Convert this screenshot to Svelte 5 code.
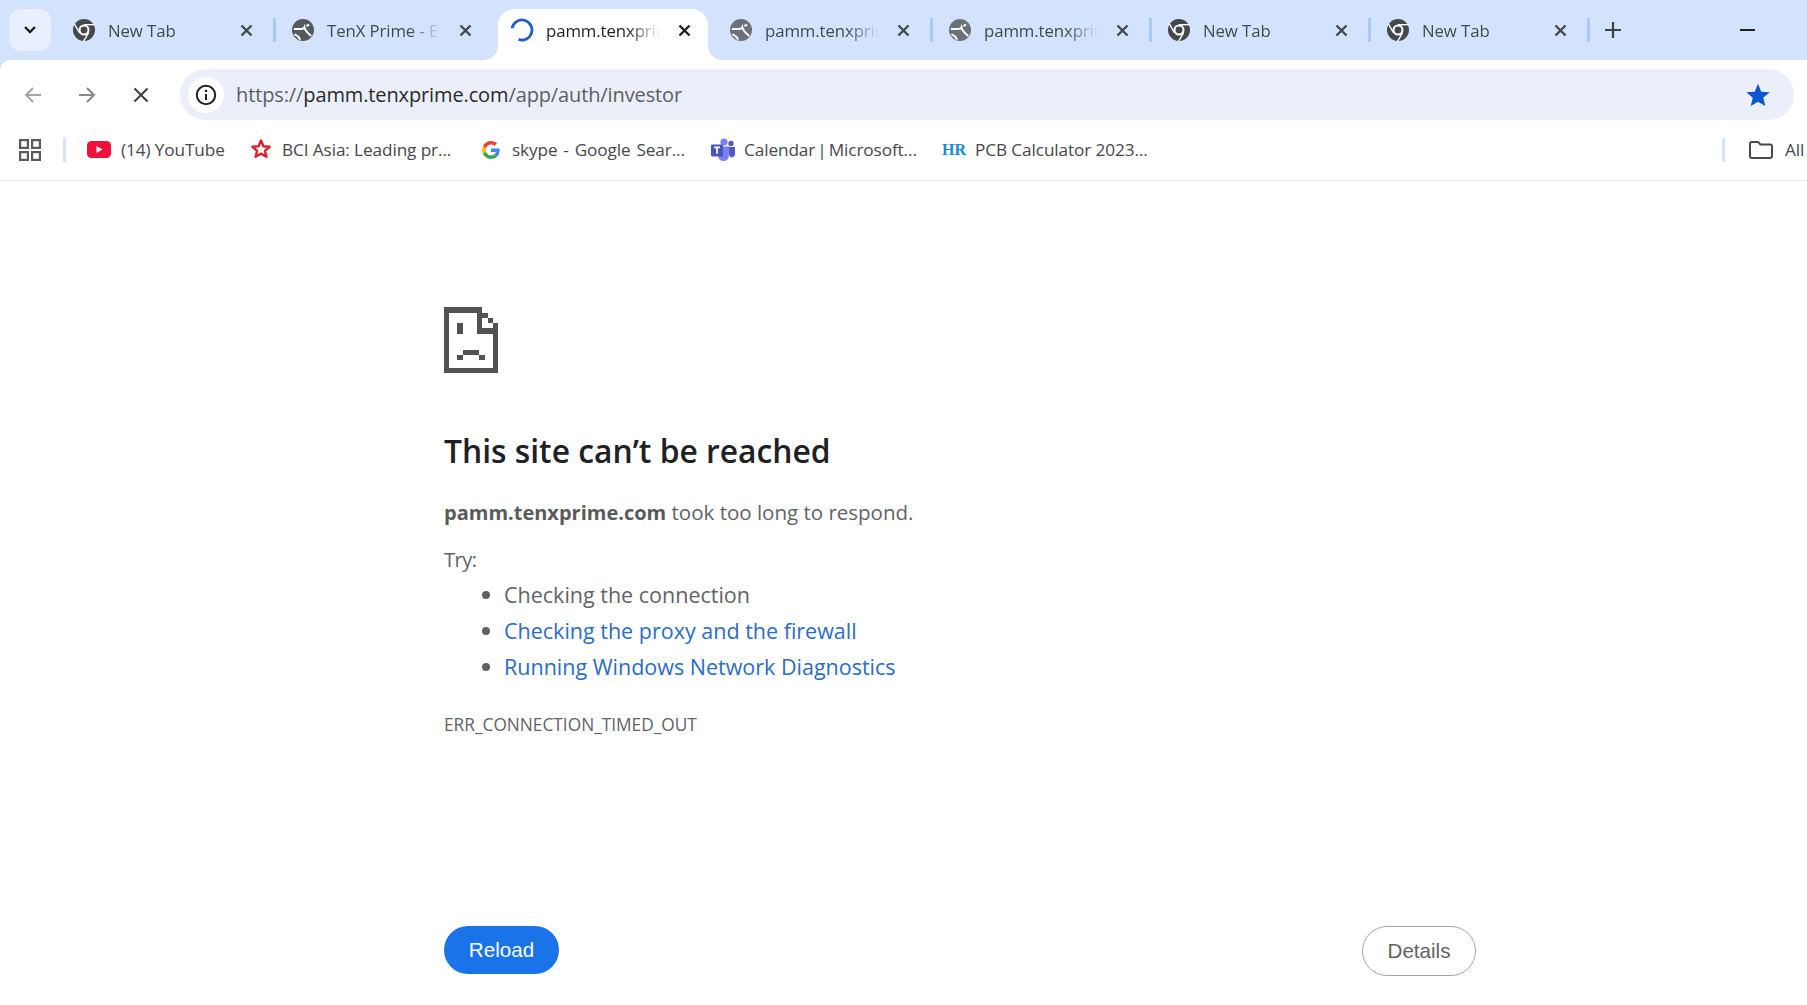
<script>
  const tabs = [
    { title: 'New Tab', icon: 'chrome' },
    { title: 'TenX Prime - Exchange', icon: 'globe' },
    { title: 'pamm.tenxprime.com', icon: 'spin', active: true },
    { title: 'pamm.tenxprime.com', icon: 'globe', faded: true },
    { title: 'pamm.tenxprime.com', icon: 'globe', faded: true },
    { title: 'New Tab', icon: 'chrome' },
    { title: 'New Tab', icon: 'chrome' }
  ];
</script>

<div class="browser">
  <header class="strip">
    <button class="toggle" aria-label="Search tabs">
      <svg width="14" height="10" viewBox="0 0 14 10"><path d="M2 2l5 5 5-5" fill="none" stroke="#1f1f1f" stroke-width="2.4"/></svg>
    </button>
    {#each tabs as tab, i}
      <div class="tab" class:active={tab.active}>
        {#if i > 0 && !tab.active && !tabs[i - 1].active}<span class="divider"></span>{/if}
        {#if tab.active}<span class="flare left"></span><span class="flare right"></span>{/if}
        <span class="fav">
          {#if tab.icon === 'chrome'}
            <svg width="22" height="22" viewBox="0 0 24 24">
              <circle cx="12" cy="12" r="12" fill="#45484d"/>
              <circle cx="12" cy="12" r="6" fill="#fff"/>
              <circle cx="12" cy="12" r="3.8" fill="#45484d"/>
              <g stroke="#fff" stroke-width="1.5">
                <path d="M12 6.2H23.5"/>
                <path d="M12 6.2H23.5" transform="rotate(120 12 12)"/>
                <path d="M12 6.2H23.5" transform="rotate(240 12 12)"/>
              </g>
            </svg>
          {:else if tab.icon === 'globe'}
            <svg width="22" height="22" viewBox="0 0 24 24" class:fade={tab.faded}>
              <circle cx="12" cy="12" r="12" fill="#55585d"/>
              <path d="M2 11h7.500c2.500 0 3.500-.6 4-2 .8 3 2.500 5.600 7.500 9.500M2.600 16.500c2.400 1 4.800 3 6.400 6M15.500 7c1 .4 2 .2 3-1" fill="none" stroke="#fff" stroke-width="2.200"/>
            </svg>
          {:else}
            <svg width="24" height="24" viewBox="0 0 24 24"><path d="M2.100 10.200A10 10 0 1 1 8.600 21.400" fill="none" stroke="#1f5fbf" stroke-width="2.800"/></svg>
          {/if}
        </span>
        <span class="title">{tab.title}</span>
        <svg class="close" width="13" height="13" viewBox="0 0 13 13"><path d="M1.500 1.500l10 10M11.500 1.500l-10 10" fill="none" stroke={tab.active ? '#1f1f1f' : '#45484d'} stroke-width="2.400"/></svg>
      </div>
    {/each}
    <span class="divider last"></span>
    <svg class="plus" width="16" height="16" viewBox="0 0 16 16"><path d="M8 0v16M0 8h16" stroke="#3c4043" stroke-width="2.200"/></svg>
    <span class="minimize"></span>
  </header>

  <div class="under-strip">
    <nav class="toolbar">
      <svg class="nav" width="20" height="18" viewBox="0 0 20 18"><path d="M18 9H3M10 2L3 9l7 7" fill="none" stroke="#a3a5a8" stroke-width="2"/></svg>
      <svg class="nav fwd" width="20" height="18" viewBox="0 0 20 18"><path d="M2 9h15M10 2l7 7-7 7" fill="none" stroke="#85888c" stroke-width="2"/></svg>
      <svg class="nav stop" width="16" height="16" viewBox="0 0 16 16"><path d="M1.500 1.500l13 13M14.500 1.500l-13 13" fill="none" stroke="#3c4043" stroke-width="2"/></svg>
      <div class="omnibox">
        <span class="info">
          <svg width="22" height="22" viewBox="0 0 22 22"><circle cx="11" cy="11" r="9.200" fill="none" stroke="#1f1f1f" stroke-width="2"/><path d="M11 10v6" stroke="#1f1f1f" stroke-width="2"/><circle cx="11" cy="7" r="1.300" fill="#1f1f1f"/></svg>
        </span>
        <span class="url">https://<b>pamm.tenxprime.com</b>/app/auth/investor</span>
        <svg class="star" width="26" height="24" viewBox="0 0 24 23"><path d="M12 0.800l3.100 7.500 8.100.6-6.200 5.300 2 7.900L12 18l-7 4.100 2-7.900L.8 8.900l8.100-.6z" fill="#0b57d0"/></svg>
      </div>
    </nav>

    <div class="bookmarks">
      <svg class="apps" width="22" height="22" viewBox="0 0 22 22"><g fill="none" stroke="#5a5a5a" stroke-width="2.200"><rect x="1.100" y="1.100" width="7.800" height="7.800"/><rect x="13.100" y="1.100" width="7.800" height="7.800"/><rect x="1.100" y="13.100" width="7.800" height="7.800"/><rect x="13.100" y="13.100" width="7.800" height="7.800"/></g></svg>
      <span class="bm-sep"></span>
      <div class="bm yt">
        <svg width="24" height="17" viewBox="0 0 24 17"><rect width="24" height="17" rx="4.500" fill="#f0103a"/><path d="M9.500 5l6 3.500-6 3.500z" fill="#fff"/></svg>
        <span>(14) YouTube</span>
      </div>
      <div class="bm bci">
        <svg width="20" height="21" viewBox="0 0 20 21"><path d="M10 1.500l2.400 5.800 6.200.5-4.700 4 1.500 6L10 14.600l-5.400 3.200 1.500-6-4.700-4 6.200-.5z" fill="none" stroke="#d8232a" stroke-width="2.400" stroke-linejoin="round"/></svg>
        <span>BCI Asia: Leading pr...</span>
      </div>
      <div class="bm goog">
        <svg width="18" height="18" viewBox="0 0 48 48"><path fill="#EA4335" d="M24 9.500c3.500 0 6.700 1.200 9.200 3.600l6.900-6.900C35.900 2.400 30.500 0 24 0 14.600 0 6.500 5.400 2.600 13.200l8 6.200C12.500 13.700 17.800 9.500 24 9.500z"/><path fill="#4285F4" d="M47 24.500c0-1.600-.1-3.100-.4-4.500H24v9h12.900c-.6 3-2.200 5.500-4.800 7.200l7.700 6c4.500-4.200 7.200-10.300 7.200-17.700z"/><path fill="#FBBC05" d="M10.500 28.600c-.5-1.500-.8-3-.8-4.600s.3-3.200.8-4.600l-8-6.200C.9 16.500 0 20.100 0 24s.9 7.500 2.600 10.800z"/><path fill="#34A853" d="M24 48c6.500 0 11.900-2.100 15.900-5.800l-7.700-6c-2.200 1.400-4.900 2.300-8.200 2.300-6.200 0-11.500-4.200-13.400-9.900l-8 6.200C6.500 42.600 14.600 48 24 48z"/></svg>
        <span>skype - Google Sear...</span>
      </div>
      <div class="bm teams">
        <svg width="24" height="23" viewBox="0 0 24 23">
          <circle cx="13" cy="4" r="3.600" fill="#7b83eb"/><circle cx="20" cy="5.500" r="2.700" fill="#5059c9"/>
          <path d="M16 9h8v7a3.500 3.500 0 0 1-5 3z" fill="#5059c9"/>
          <path d="M7 8.500h11v9a5 5 0 0 1-11 0z" fill="#7b83eb"/>
          <rect y="6.500" width="12" height="12" rx="1.200" fill="#4b53bc"/>
          <path d="M3 9.300h6M6 9.300v6.500" stroke="#fff" stroke-width="1.700"/>
        </svg>
        <span>Calendar | Microsoft...</span>
      </div>
      <div class="bm hr">
        <span class="hr-logo">HR</span>
        <span>PCB Calculator 2023...</span>
      </div>
      <span class="bm-sep end"></span>
      <svg class="folder" width="24" height="18" viewBox="0 0 24 18"><path d="M1 3a2 2 0 0 1 2-2h6l2.500 2.500H21a2 2 0 0 1 2 2V15a2 2 0 0 1-2 2H3a2 2 0 0 1-2-2z" fill="none" stroke="#4a4a4a" stroke-width="2"/></svg>
      <span class="all">All</span>
    </div>
  </div>

  <main class="page">
    <svg class="sad" width="54" height="66" viewBox="0 0 162 197" shape-rendering="crispEdges" fill="#525252">
      <rect width="113" height="16"/><rect width="16" height="197"/><rect y="181" width="162" height="16"/>
      <rect x="146" y="48" width="16" height="149"/><rect x="98" y="16" width="16" height="47"/>
      <rect x="98" y="63" width="64" height="16"/><rect x="113" y="16" width="18" height="17"/>
      <rect x="131" y="33" width="15" height="15"/><rect x="40" y="48" width="16" height="32"/>
      <rect x="40" y="143" width="16" height="15"/><rect x="56" y="128" width="50" height="15"/>
      <rect x="106" y="143" width="16" height="15"/>
    </svg>
    <h1>This site can’t be reached</h1>
    <p class="lead"><strong>pamm.tenxprime.com</strong> took too long to respond.</p>
    <p class="try">Try:</p>
    <ul>
      <li>Checking the connection</li>
      <li><a href="#proxy">Checking the proxy and the firewall</a></li>
      <li><a href="#diag">Running Windows Network Diagnostics</a></li>
    </ul>
    <div class="code">ERR_CONNECTION_TIMED_OUT</div>
    <div class="actions">
      <button class="reload">Reload</button>
      <button class="details">Details</button>
    </div>
  </main>
</div>

<style>
  :global(body) { margin: 0; background: #fff; overflow: hidden; }
  .browser { width: 1807px; height: 1005px; overflow: hidden; font-family: "Open Sans", sans-serif; color: #3c4043; }

  .strip { height: 60px; background: #d3e3fd; display: flex; align-items: flex-end; position: relative; }
  .toggle { width: 42px; height: 42px; margin: 0 4px 9px 9px; padding: 0; border: 0; border-radius: 12px; background: #e8f0fe; display: flex; align-items: center; justify-content: center; }
  .tab { width: 219px; height: 51px; flex: none; position: relative; display: flex; align-items: center; padding: 0 0 9px 0; box-sizing: border-box; }
  .tab.active::before { content: ""; position: absolute; left: 5px; right: 4px; top: 0; bottom: 0; background: #fff; border-radius: 16px 16px 0 0; }
  .tab > * { position: relative; }
  .flare { position: absolute !important; bottom: 0; width: 14px; height: 14px; }
  .flare.left { left: -9px; background: radial-gradient(circle at 0 0, transparent 13.500px, #fff 14px); }
  .flare.right { right: -10px; background: radial-gradient(circle at 100% 0, transparent 13.500px, #fff 14px); }
  .divider { position: absolute !important; left: -1px; top: 9px; width: 3px; height: 24px; background: #a8c7fa; }
  .divider.last { position: relative !important; left: -1px; top: -18px; flex: none; margin-right: 14px; }
  .fav { width: 24px; height: 24px; margin-left: 17px; margin-right: 12px; display: flex; align-items: center; justify-content: center; flex: none; }
  .fade { opacity: .82; }
  .title { width: 114px; flex: none; white-space: nowrap; overflow: hidden; font-size: 16.800px; letter-spacing: -0.1px; color: #45484d; padding-top: 1px;
    -webkit-mask-image: linear-gradient(90deg, #000 72%, transparent 100%); mask-image: linear-gradient(90deg, #000 72%, transparent 100%); }
  .active .title { color: #1f1f1f; }
  .close { position: absolute !important; left: 185px; top: 15px; }
  .plus { flex: none; margin-bottom: 22px; }
  .minimize { width: 15px; height: 2px; background: #1f1f1f; margin: 0 0 29px 119px; }

  .under-strip { background: #d3e3fd; }
  .toolbar { height: 60px; background: #fff; border-radius: 10px 0 0 0; display: flex; align-items: center; box-sizing: border-box; }
  .nav { flex: none; margin-left: 23px; margin-top: 10px; }
  .fwd { margin-left: 34px; }
  .stop { margin-left: 36px; margin-right: 31px; }
  .omnibox { width: 1614px; height: 51px; margin-top: 9px; background: #eaeff9; border-radius: 26px; display: flex; align-items: center; box-sizing: border-box; padding-left: 8px; }
  .info { width: 36px; height: 36px; border-radius: 50%; background: #fff; display: flex; align-items: center; justify-content: center; flex: none; }
  .url { font-size: 20px; color: #5a5e63; margin-left: 12px; flex: 1; letter-spacing: -0.12px; }
  .url b { font-weight: 400; color: #2a2a2a; }
  .star { margin-right: 23px; }

  .bookmarks { height: 61px; padding-bottom: 1px; background: #fff; border-bottom: 1px solid #e2e3e5; box-sizing: border-box; display: flex; align-items: center; font-size: 17.200px; color: #45484d; letter-spacing: -0.1px; }
  .apps { margin-left: 19px; flex: none; }
  .bm-sep { width: 3px; height: 24px; background: #d3e3fd; margin: 0 21px 0 22px; flex: none; }
  .bm-sep.end { margin-left: 0; margin-right: 24px; }
  .bm { display: flex; align-items: center; white-space: nowrap; flex: none; }
  .yt { width: 164px; gap: 10px; }
  .bci { width: 231px; gap: 11px; }
  .goog { width: 229px; gap: 12px; word-spacing: 1.500px; }
  .teams { width: 231px; gap: 9px; word-spacing: -2.300px; }
  .hr { width: 780px; gap: 9px; }
  .hr-logo { width: 24px; font-family: "Liberation Serif", serif; font-weight: 700; font-size: 16px; color: #1b8ad3; letter-spacing: 0; }
  .folder { flex: none; margin-right: 12px; }
  .all { white-space: nowrap; }

  .page { width: 1032px; margin-left: 444px; padding-top: 126px; }
  .sad { display: block; }
  h1 { font-size: 31.800px; font-weight: 600; line-height: 40px; color: #202124; margin: 58px 0 0; }
  p { margin: 0; color: #5f6368; font-size: 20.500px; line-height: 36px; }
  .lead { margin-top: 23px; }
  .lead strong { font-weight: 700; font-size: 20px; color: #5a5a5a; }
  .try { margin-top: 11px; font-size: 20px; letter-spacing: -0.5px; }
  ul { margin: -1px 0 0; padding: 0 0 0 60px; list-style: none; color: #5f6368; font-size: 21.500px; line-height: 36px; }
  li { position: relative; }
  li::before { content: ""; position: absolute; left: -22px; top: 14px; width: 8px; height: 8px; border-radius: 50%; background: #5f6368; }
  a { color: #2b6cc4; text-decoration: none; }
  .code { margin-top: 28px; font-size: 17.300px; line-height: 24px; color: #5f6368; }
  .actions { margin-top: 189px; display: flex; justify-content: space-between; align-items: flex-start; }
  button { font-family: "Liberation Sans", sans-serif; font-size: 20.600px; }
  .reload { width: 115px; height: 48px; border: 0; border-radius: 24px; background: #1a73e8; color: #fff; padding: 0; }
  .details { width: 114px; height: 50px; border: 1px solid #a5a5a5; border-radius: 25px; background: #fff; color: #5f6368; padding: 0; }
</style>
